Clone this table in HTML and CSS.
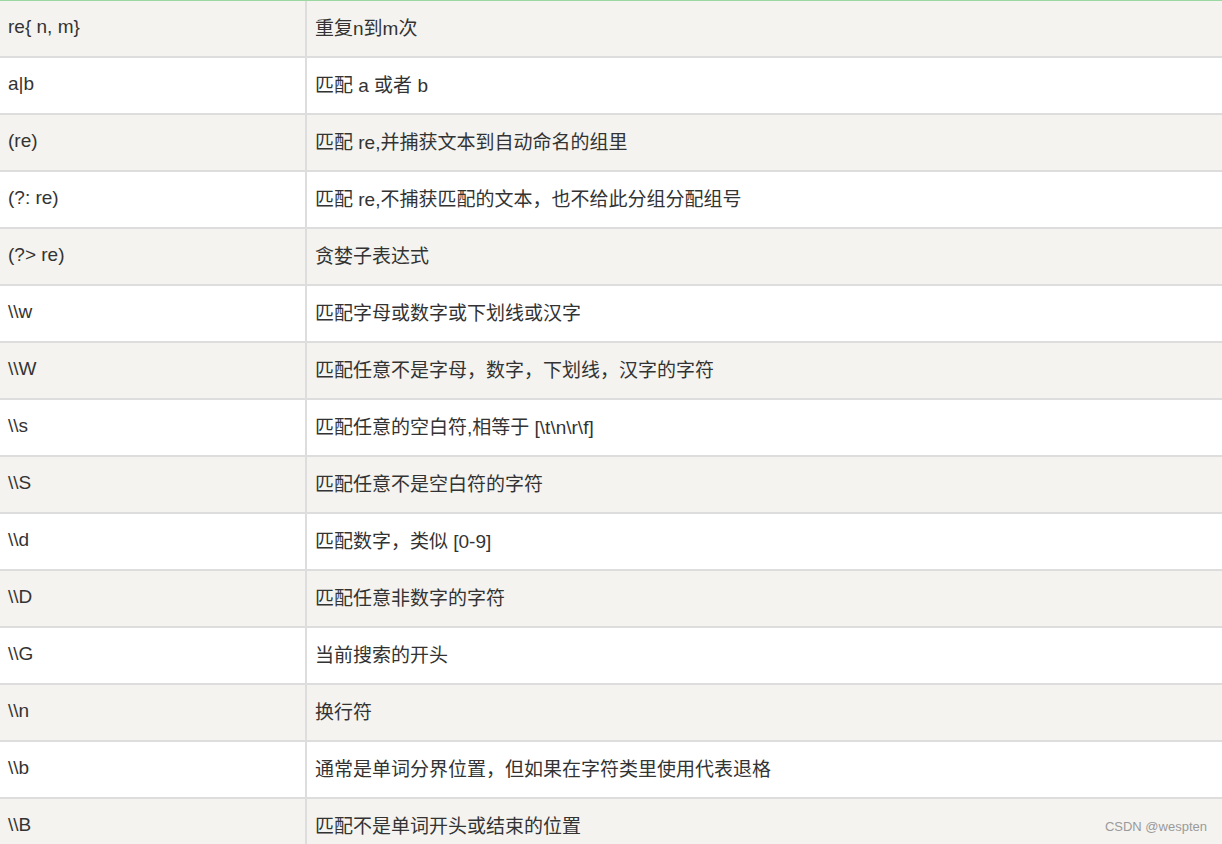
FILE: index.html
```html
<!DOCTYPE html>
<html lang="zh">
<head>
<meta charset="utf-8">
<link rel="stylesheet" href="styles.css">
</head>
<body>
<div class="page">
<table class="re-table">
<tbody>
<tr><td>re{ n, m}</td><td>重复n到m次</td></tr>
<tr><td>a|b</td><td>匹配 a 或者 b</td></tr>
<tr><td>(re)</td><td>匹配 re,并捕获文本到自动命名的组里</td></tr>
<tr><td>(?: re)</td><td>匹配 re,不捕获匹配的文本，也不给此分组分配组号</td></tr>
<tr><td>(?&gt; re)</td><td>贪婪子表达式</td></tr>
<tr><td>\\w</td><td>匹配字母或数字或下划线或汉字</td></tr>
<tr><td>\\W</td><td>匹配任意不是字母，数字，下划线，汉字的字符</td></tr>
<tr><td>\\s</td><td>匹配任意的空白符,相等于 [\t\n\r\f]</td></tr>
<tr><td>\\S</td><td>匹配任意不是空白符的字符</td></tr>
<tr><td>\\d</td><td>匹配数字，类似 [0-9]</td></tr>
<tr><td>\\D</td><td>匹配任意非数字的字符</td></tr>
<tr><td>\\G</td><td>当前搜索的开头</td></tr>
<tr><td>\\n</td><td>换行符</td></tr>
<tr><td>\\b</td><td>通常是单词分界位置，但如果在字符类里使用代表退格</td></tr>
<tr><td>\\B</td><td>匹配不是单词开头或结束的位置</td></tr>
</tbody>
</table>
<div class="watermark">CSDN @wespten</div>
</div>
</body>
</html>
```

FILE: styles.css
```css
html, body {
  margin: 0;
  padding: 0;
  background: #ffffff;
}
body {
  width: 1222px;
  height: 844px;
  overflow: hidden;
}
.page {
  position: relative;
  width: 1222px;
  height: 844px;
  overflow: hidden;
  border-top: 1px solid #9ad8a2;
  box-sizing: border-box;
}
.re-table {
  width: 1222px;
  border-collapse: collapse;
  table-layout: fixed;
  font-family: "Liberation Sans", "Noto Sans CJK SC", sans-serif;
  font-size: 19px;
  color: #333333;
}
.re-table td {
  height: 51px;
  padding: 0 8px 4px;
  border-bottom: 2px solid #dddddd;
  vertical-align: middle;
  box-sizing: content-box;
  white-space: nowrap;
}
.re-table td:first-child {
  width: 289px;
  border-right: 2px solid #dddddd;
}
.re-table tr:nth-child(odd) td {
  background: #f4f3f0;
}
.re-table tr:nth-child(even) td {
  background: #ffffff;
}
.watermark {
  position: absolute;
  right: 15px;
  top: 818px;
  font-family: "Liberation Sans", sans-serif;
  font-size: 13px;
  color: #9a9a9a;
}
```
